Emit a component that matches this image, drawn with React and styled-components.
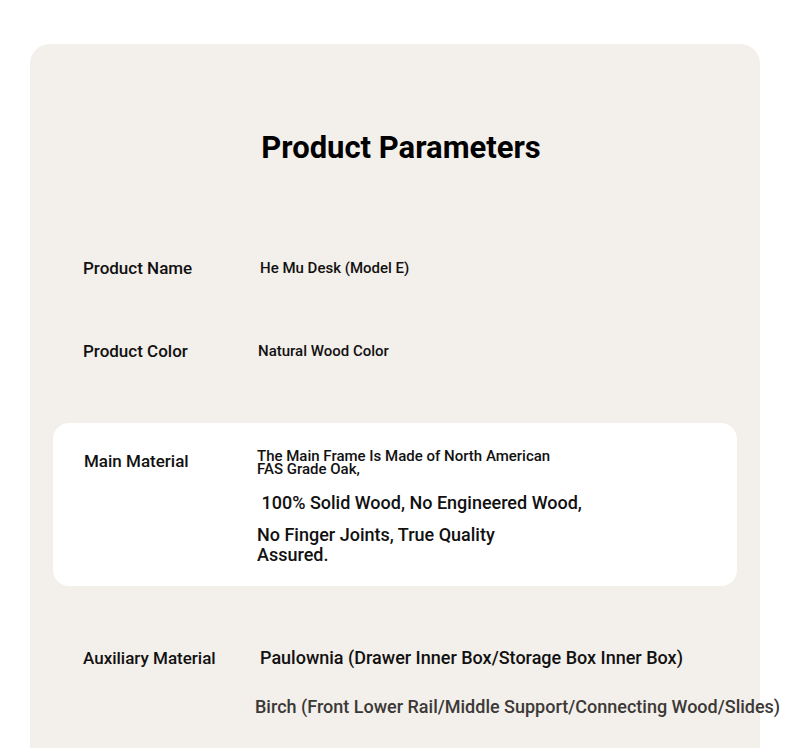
import React from 'react';
import styled, { createGlobalStyle } from 'styled-components';

const GlobalStyle = createGlobalStyle`
  html, body {
    margin: 0;
    padding: 0;
    background: #ffffff;
    overflow: hidden;
  }
  body {
    font-family: Roboto, "Liberation Sans", Arial, sans-serif;
    color: #111;
  }
`;

const Page = styled.div`
  height: 748px;
  padding: 44px 30px 0;
  box-sizing: border-box;
`;

const Card = styled.section`
  background: #f3efea;
  border-radius: 20px 20px 0 0;
  padding: 84px 23px 0;
  height: 720px;
  box-sizing: border-box;
`;

const Title = styled.h1`
  margin: 0 0 80px;
  font-size: 31px;
  line-height: 40px;
  font-weight: 700;
  color: #000;
  text-align: center;
  padding-left: 12px;
`;

const Row = styled.div`
  display: grid;
  grid-template-columns: 175px 1fr;
  align-items: ${props => (props.$top ? 'start' : 'center')};
  padding: ${props => props.$pad || '0 30px'};
  margin-bottom: ${props => props.$gap || '0'};
  min-height: 40px;
  background: ${props => (props.$highlight ? '#ffffff' : 'transparent')};
  border-radius: ${props => (props.$highlight ? '16px' : '0')};
`;

const Label = styled.div`
  font-size: 17px;
  line-height: 20px;
  font-weight: 500;
  color: #111;
`;

const Values = styled.div`
  display: flex;
  flex-direction: column;
`;

const Value = styled.div`
  font-size: ${props => props.$size || 15}px;
  line-height: ${props => props.$lh || 20}px;
  font-weight: 500;
  color: ${props => props.$muted ? '#3b3937' : '#111'};
  margin-left: ${props => props.$shift || 0}px;
  margin-top: ${props => props.$mt || 0}px;
  max-width: ${props => props.$max || 'none'};
  white-space: ${props => (props.$nowrap ? 'pre' : 'normal')};
`;

export default function App() {
  return (
    <>
      <GlobalStyle />
      <Page>
        <Card>
          <Title>Product Parameters</Title>

          <Row $gap="43px">
            <Label>Product Name</Label>
            <Value $shift={2}>He Mu Desk (Model E)</Value>
          </Row>

          <Row $gap="52px">
            <Label>Product Color</Label>
            <Value>Natural Wood Color</Value>
          </Row>

          <Row $highlight $top $pad="28px 30px 21px 31px" $gap="62px">
            <Label>Main Material</Label>
            <Values>
              <Value $lh={13} $max="310px" $shift={-2} $mt={-1}>
                The Main Frame Is Made of North American FAS Grade Oak,
              </Value>
              <Value $size={18} $mt={17} $shift={-2} $nowrap>
                {' 100% Solid Wood, No Engineered Wood,'}
              </Value>
              <Value $size={18} $mt={12} $shift={-2} $max="260px">
                No Finger Joints, True Quality Assured.
              </Value>
            </Values>
          </Row>

          <Row $top>
            <Label>Auxiliary Material</Label>
            <Values>
              <Value $size={18} $shift={2} $nowrap>
                Paulownia (Drawer Inner Box/Storage Box Inner Box)
              </Value>
              <Value $size={18} $mt={29} $shift={-3} $muted $nowrap>
                Birch (Front Lower Rail/Middle Support/Connecting Wood/Slides)
              </Value>
            </Values>
          </Row>
        </Card>
      </Page>
    </>
  );
}
